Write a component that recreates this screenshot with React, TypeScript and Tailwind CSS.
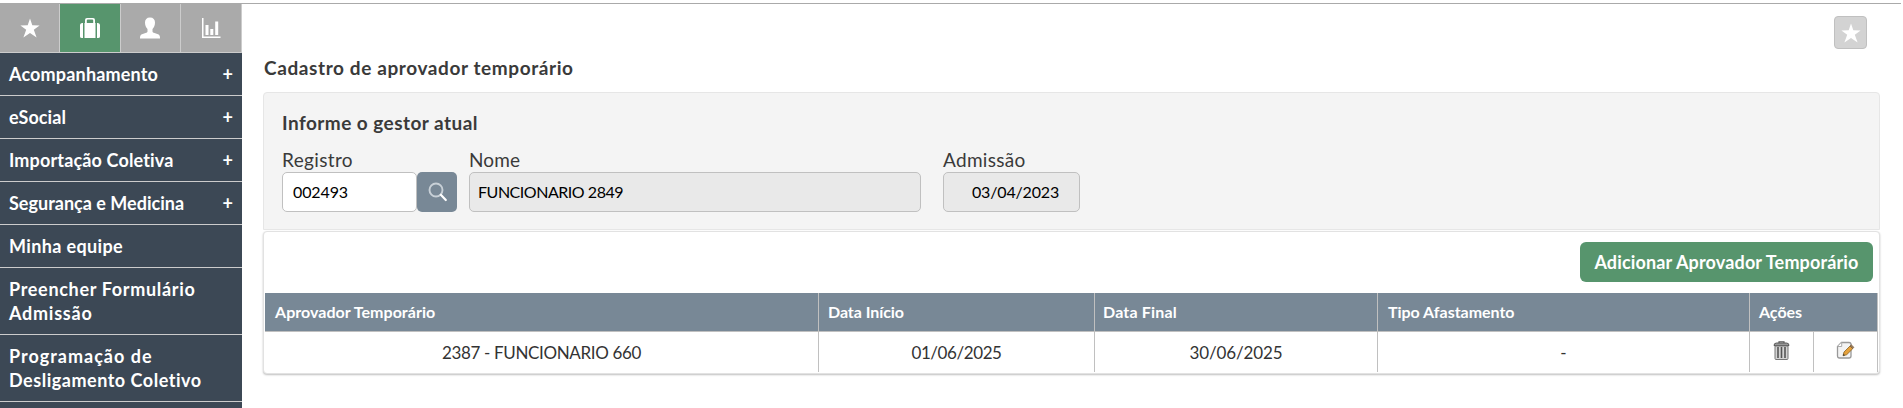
import React from 'react';

type MenuItem = { lines: { text: string; tracking: string }[]; expandable?: boolean };

const menu: MenuItem[] = [
  { lines: [{ text: 'Acompanhamento', tracking: 'tracking-[0.17px]' }], expandable: true },
  { lines: [{ text: 'eSocial', tracking: 'tracking-[0.07px]' }], expandable: true },
  { lines: [{ text: 'Importação Coletiva', tracking: 'tracking-[0.15px]' }], expandable: true },
  { lines: [{ text: 'Segurança e Medicina', tracking: 'tracking-[0.01px]' }], expandable: true },
  { lines: [{ text: 'Minha equipe', tracking: 'tracking-[0.36px]' }] },
  {
    lines: [
      { text: 'Preencher Formulário', tracking: 'tracking-[0.68px]' },
      { text: 'Admissão', tracking: 'tracking-[0.75px]' },
    ],
  },
  {
    lines: [
      { text: 'Programação de', tracking: 'tracking-[1px]' },
      { text: 'Desligamento Coletivo', tracking: 'tracking-[0.52px]' },
    ],
  },
];

const Star = ({ className }: { className: string }) => (
  <svg className={className} viewBox="0 0 20 20" fill="#fff">
    <path d="M10 0.5 12.3 7.3 19.6 7.4 13.8 11.8 16.6 19.6 10 15 3.4 19.6 6.2 11.8 0.4 7.4 7.7 7.3Z" />
  </svg>
);

const Suitcase = () => (
  <svg className="h-[22px] w-[22px]" viewBox="0 0 22 22" fill="#fff">
    <path d="M1 8q0-1.5 2-2h1v15H3q-2 0-2-1.500ZM21 8q0-1.500-2-2h-1v15h1q2 0 2-1.500Z" />
    <path d="M6 6V3q0-2 2-2h6q2 0 2 2v3h0.500v15H5.500V6ZM7.800 3.500V6h6.400V3.500q0-1-1-1H8.800q-1 0-1 1Z" fillRule="evenodd" />
  </svg>
);

const Person = () => (
  <svg className="mr-[2px] h-[22px] w-[22px]" viewBox="0 0 22 22" fill="#fff">
    <path d="M11 0.500c3.300 0 5 2 5 5 0 3-1 5-2.500 6.500v2.500c0 .8.800 1.200 2 1.600l3.500 1.200c1.600.6 2 1.700 2 4.200H1c0-2.500.4-3.600 2-4.200l3.500-1.200c1.200-.4 2-.8 2-1.600V12C7 10.500 6 8.500 6 5.500c0-3 1.700-5 5-5Z" />
  </svg>
);

const Chart = () => (
  <svg className="h-[22px] w-[20px]" viewBox="0 0 20 22" fill="#fff">
    <path d="M1 1h1.500v18.500H19.500V21H1ZM4.500 8h3v10h-3ZM9.300 12h3v6h-3ZM14.200 4.500h3v13.500h-3Z" />
  </svg>
);

const Search = () => (
  <svg className="ml-px h-[20px] w-[20px]" viewBox="0 0 20 20" fill="none">
    <circle cx="8" cy="8" r="6.500" stroke="#c8d0d7" strokeWidth="1.900" />
    <path d="M12.800 12.800 17.800 18" stroke="#fff" strokeWidth="2.200" strokeLinecap="round" />
  </svg>
);

const Trash = () => (
  <svg className="h-[19px] w-[17px]" viewBox="0 0 17 19">
    <path d="M6 2V.8h5V2" fill="none" stroke="#555" strokeWidth="1.200" />
    <path d="M1 4.500Q1 2 3.500 2h10Q16 2 16 4.500Z" fill="#999" stroke="#5a5a5a" />
    <path d="M2 5h13v12.500q0 1-1 1H3q-1 0-1-1Z" fill="#d4d4d4" stroke="#777" />
    <path d="M5 6v11M8.500 6v11M12 6v11" stroke="#555" strokeWidth="1.600" />
  </svg>
);

const Edit = () => (
  <svg className="h-[19px] w-[19px]" viewBox="0 0 19 19">
    <path d="M5.500 1.500H13q2 0 2 2V15q0 2-2 2H3.500q-2 0-2-2V5.500Z" fill="#f3f3f3" stroke="#999" strokeWidth="1.300" />
    <path d="M5.700 1.500v4h-4" fill="#fff" stroke="#aaa" />
    <path d="m7 14.800 1-3.800 6-6 2.800 2.600-6.100 6.100Z" fill="#e5a03a" stroke="#8a6425" strokeWidth=".8" />
    <path d="m14 5 1.300-1.200 2.700 2.600-1.200 1.200Z" fill="#9b7c5a" stroke="#75593b" strokeWidth=".6" />
    <path d="m7 14.800.5-2 1.500 1.400Z" fill="#333" />
  </svg>
);

const tabs = [
  { icon: <Star className="h-[20px] w-[20px]" />, style: 'w-[60px] bg-[#aaaaaa]' },
  { icon: <Suitcase />, style: 'w-[61px] bg-[#57956d]' },
  { icon: <Person />, style: 'w-[60px] bg-[#aaaaaa]' },
  { icon: <Chart />, style: 'w-[61px] bg-[#aaaaaa]' },
];

const Sidebar = () => (
  <aside className="flex h-[404px] w-[242px] shrink-0 flex-col overflow-hidden bg-[#3c4855]">
    <div className="flex h-[49px] shrink-0 border-b border-[#cccccc]">
      {tabs.map((tab, i) => (
        <div key={i} className={`flex items-center justify-center border-r border-[#cccccc] ${tab.style}`}>
          {tab.icon}
        </div>
      ))}
    </div>
    {menu.map((item) => (
      <div
        key={item.lines[0].text}
        className="flex shrink-0 items-center justify-between border-b border-[#cccccc] py-[9px] pr-[9px] pl-[9px] text-[18px] leading-[24px] font-bold text-white"
      >
        <div>
          {item.lines.map((line) => (
            <div key={line.text} className={`whitespace-nowrap ${line.tracking}`}>
              {line.text}
            </div>
          ))}
        </div>
        {item.expandable && <span className="text-[18px]">+</span>}
      </div>
    ))}
  </aside>
);

const fieldBase =
  'h-[40px] rounded-[5px] border border-[#c0c0c0] text-[16px] leading-[38px] text-black whitespace-nowrap';
const label = 'h-[26px] text-[19px] leading-[28px] text-[#3a3a3a] whitespace-nowrap';

const ManagerPanel = () => (
  <section className="h-[138px] rounded-t-[4px] border border-[#e6e6e6] bg-[#f4f4f4] pt-[16px] pl-[18px]">
    <h2 className="h-[28px] text-[19px] leading-[27px] font-bold tracking-[0.45px] text-[#3a3a3a]">
      Informe o gestor atual
    </h2>
    <div className="flex pt-[9px]">
      <div className="w-[187px]">
        <div className={`${label} tracking-[0.36px]`}>Registro</div>
        <div className="flex">
          <div className={`${fieldBase} w-[135px] bg-white pl-[10px] tracking-[-0.11px]`}>002493</div>
          <div className="flex h-[40px] w-[40px] items-center justify-center rounded-[5px] bg-[#788896]">
            <Search />
          </div>
        </div>
      </div>
      <div className="w-[474px]">
        <div className={`${label} tracking-[0.09px]`}>Nome</div>
        <div className={`${fieldBase} w-[452px] bg-[#e9e9e9] pl-[8px] tracking-[-0.47px]`}>FUNCIONARIO 2849</div>
      </div>
      <div>
        <div className={`${label} tracking-[0.3px]`}>Admissão</div>
        <div className={`${fieldBase} w-[137px] bg-[#e9e9e9] pl-[28px] tracking-[-0.17px]`}>03/04/2023</div>
      </div>
    </div>
  </section>
);

const columns = [
  { title: 'Aprovador Temporário', style: 'pl-[10px] tracking-[0.03px]' },
  { title: 'Data Início', style: 'pl-[9px] tracking-[-0.06px]' },
  { title: 'Data Final', style: 'pl-[8px] tracking-[0.18px]' },
  { title: 'Tipo Afastamento', style: 'pl-[10px] tracking-[-0.02px]' },
  { title: 'Ações', style: 'pl-[9px] tracking-[-0.05px]' },
];

const cell = 'flex items-center justify-center border-r border-[#c0c0c0]';

const ApproversPanel = () => (
  <section className="mt-px h-[143px] rounded-[4px] border border-[#e2e2e2] bg-white pl-px shadow-[0_1px_2px_rgba(0,0,0,0.25)]">
    <div className="flex h-[61px] justify-end pt-[10px] pr-[6px]">
      <button className="h-[40px] w-[293px] rounded-[6px] bg-[#57956d] text-[18px] font-bold tracking-[0.15px] whitespace-nowrap text-white">
        Adicionar Aprovador Temporário
      </button>
    </div>
    <div className="grid h-[39px] w-[1613px] grid-cols-[554px_276px_283px_372px_128px] border-b border-[#c0c0c0] bg-[#788896]">
      {columns.map((column) => (
        <div
          key={column.title}
          className={`border-r border-[#c0c0c0] text-[16px] leading-[38px] font-bold whitespace-nowrap text-white ${column.style}`}
        >
          {column.title}
        </div>
      ))}
    </div>
    <div className="grid h-[40px] w-[1613px] grid-cols-[554px_276px_283px_372px_64px_64px] text-[17px] whitespace-nowrap text-[#333333]">
      <div className={`${cell} pt-[2px] tracking-[-0.35px]`}>2387 - FUNCIONARIO 660</div>
      <div className={`${cell} pt-[2px] tracking-[-0.42px]`}>01/06/2025</div>
      <div className={`${cell} pt-[2px] tracking-[-0.12px]`}>30/06/2025</div>
      <div className={`${cell} pt-[2px]`}>-</div>
      <div className={`${cell} pb-[4px]`}>
        <Trash />
      </div>
      <div className={`${cell} pb-[4px]`}>
        <Edit />
      </div>
    </div>
  </section>
);

export default function App() {
  return (
    <div className="flex h-[408px] w-full flex-col overflow-hidden bg-white pt-[3px] font-['Lato','Open_Sans',sans-serif]">
      <div className="mr-[2px] h-px shrink-0 bg-[#aaaaaa]" />
      <div className="flex">
        <Sidebar />
        <main className="flex-1 pl-[21px]">
          <div className="flex h-[88px] items-start justify-between pr-[36px]">
            <h1 className="pt-[50px] pl-px text-[19px] leading-[27px] font-bold tracking-[0.6px] whitespace-nowrap text-[#3a3a3a]">
              Cadastro de aprovador temporário
            </h1>
            <div className="mt-[12px] flex h-[33px] w-[33px] items-center justify-center rounded-[4px] border border-[#c0c0c0] bg-[#d3d3d3]">
              <Star className="h-[20px] w-[20px]" />
            </div>
          </div>
          <div className="w-[1617px]">
            <ManagerPanel />
            <ApproversPanel />
          </div>
        </main>
      </div>
    </div>
  );
}
